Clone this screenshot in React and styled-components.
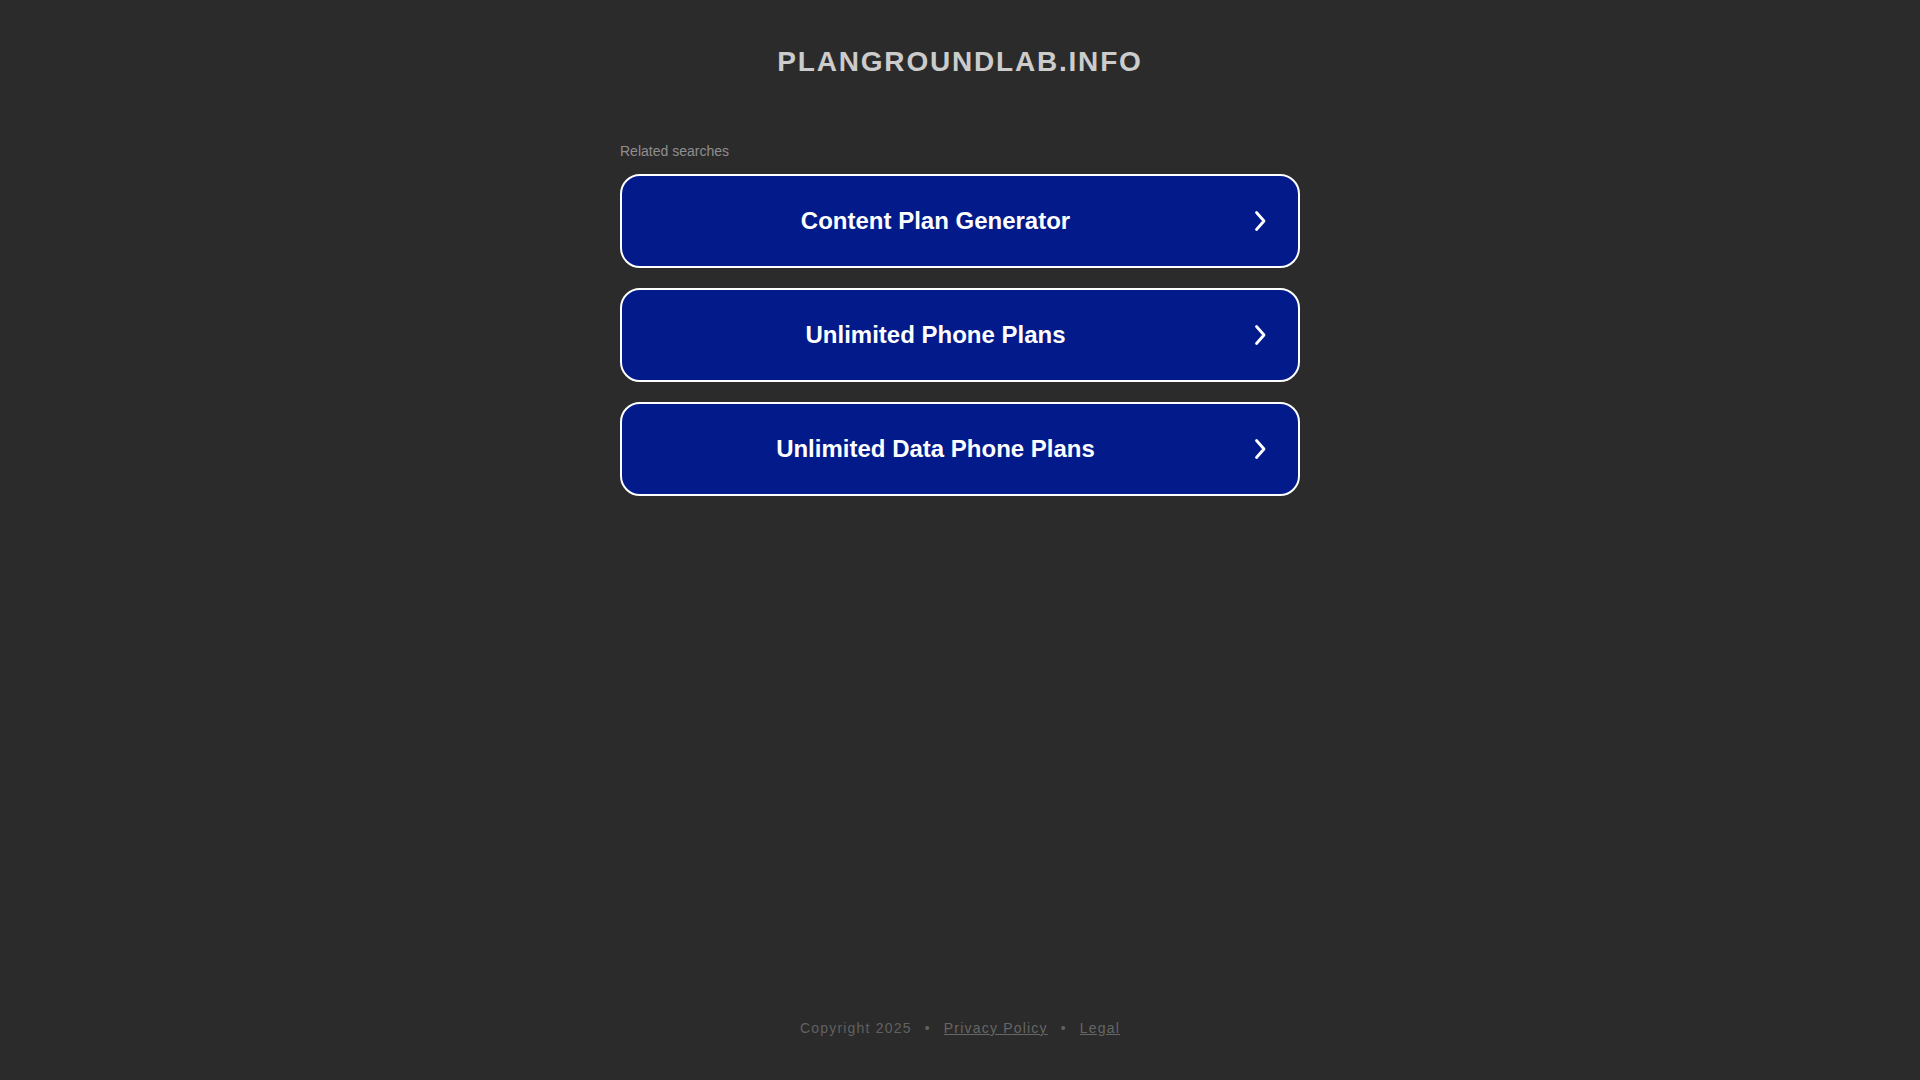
import React from 'react';
import styled, { createGlobalStyle } from 'styled-components';

const GlobalStyle = createGlobalStyle`
  html, body {
    margin: 0;
    padding: 0;
    background: #2b2b2b;
    font-family: "Liberation Sans", Arial, sans-serif;
  }
`;

const Page = styled.div`
  min-height: 100vh;
  display: flex;
  flex-direction: column;
  align-items: center;
  box-sizing: border-box;
`;

const Domain = styled.h1`
  margin: 0;
  padding-top: 46px;
  font-size: 28px;
  line-height: 32px;
  font-weight: 700;
  letter-spacing: 1.8px;
  color: #cccccc;
  text-transform: uppercase;
`;

const Results = styled.div`
  width: 680px;
  margin-top: 65px;
`;

const Caption = styled.div`
  font-size: 14px;
  line-height: 16px;
  color: #8f8f8f;
  margin-bottom: 15px;
`;

const List = styled.div`
  display: flex;
  flex-direction: column;
  gap: 20px;
`;

const AdLink = styled.a`
  display: flex;
  align-items: center;
  box-sizing: border-box;
  height: 94px;
  padding: 0 32px 0 33px;
  background: #021a8a;
  border: 2px solid #ffffff;
  border-radius: 20px;
  color: #ffffff;
  text-decoration: none;
  cursor: pointer;
`;

const AdText = styled.span`
  flex: 1;
  margin-right: 38px;
  text-align: center;
  font-size: 24px;
  font-weight: 700;
`;

const Footer = styled.footer`
  margin-top: auto;
  padding-bottom: 42px;
  font-size: 14px;
  line-height: 20px;
  letter-spacing: 1.2px;
  color: #616161;
`;

const FooterLink = styled.a`
  color: #666666;
  text-decoration: underline;
`;

const Dot = styled.span`
  margin: 0 13px;
`;

const Chevron = () => (
  <svg width="12" height="22" viewBox="0 0 12 22">
    <polyline
      points="2.5,2.5 10,11 2.5,19.5"
      fill="none"
      stroke="#ffffff"
      strokeWidth="2.8"
      strokeLinecap="round"
      strokeLinejoin="round"
    />
  </svg>
);

const searches = ['Content Plan Generator', 'Unlimited Phone Plans', 'Unlimited Data Phone Plans'];

export default function App() {
  return (
    <>
      <GlobalStyle />
      <Page>
        <Domain>plangroundlab.info</Domain>
        <Results>
          <Caption>Related searches</Caption>
          <List>
            {searches.map((s) => (
              <AdLink key={s}>
                <AdText>{s}</AdText>
                <Chevron />
              </AdLink>
            ))}
          </List>
        </Results>
        <Footer>
          Copyright 2025<Dot>•</Dot>
          <FooterLink>Privacy Policy</FooterLink>
          <Dot>•</Dot>
          <FooterLink>Legal</FooterLink>
        </Footer>
      </Page>
    </>
  );
}
